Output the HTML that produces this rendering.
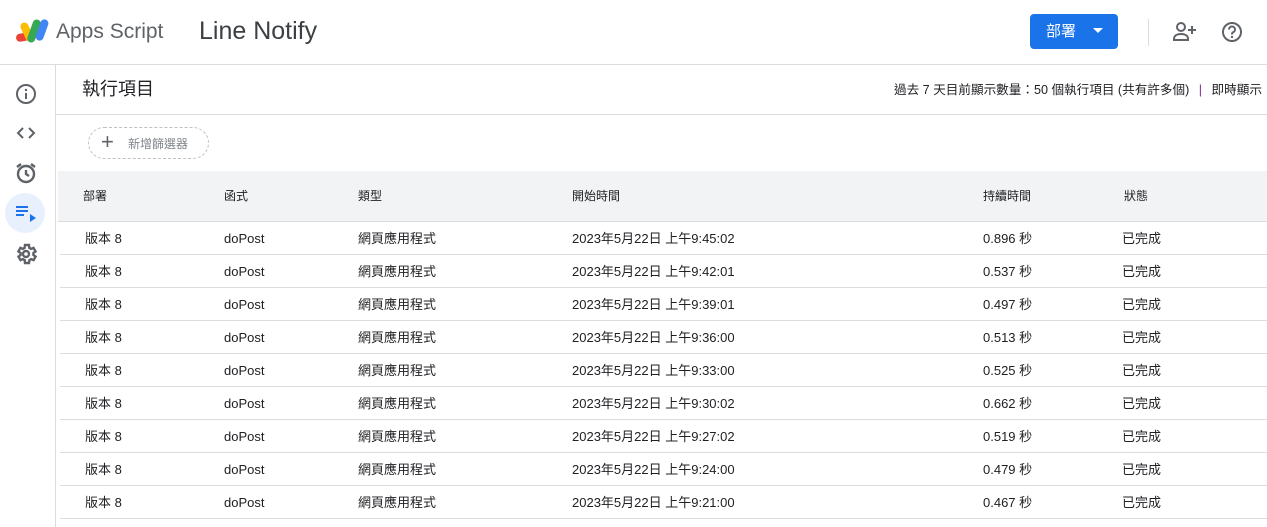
<!DOCTYPE html>
<html><head><meta charset="utf-8"><style>
body{margin:0;width:1267px;height:527px;overflow:hidden;background:#fff;font-family:"Liberation Sans","Noto Sans CJK TC",sans-serif;color:#3c4043;position:relative}
.abs{position:absolute}
.top{left:0;top:0;width:1267px;height:64px;border-bottom:1px solid #dadce0}
.side{left:0;top:65px;width:55px;height:462px;border-right:1px solid #dadce0}
.row{position:absolute;left:60px;width:1207px;height:32px;border-bottom:1px solid #dadce0;font-size:13px;color:#202124}
.row span,.hd span{position:absolute;top:9px;line-height:16px;white-space:nowrap}
.hd{position:absolute;left:58px;top:171px;width:1209px;height:50px;background:#f1f3f4;border-bottom:1px solid #dadce0;font-size:12px;color:#202124}
.hd span{top:17px}
</style></head><body>
<div class="abs top"></div>
<svg class="abs" style="left:15px;top:17px" width="34" height="30" viewBox="0 0 34 30">
<rect x="1" y="16" width="16" height="8" rx="4" fill="#ea4335" transform="rotate(-10 9 20)"/>
<rect x="8" y="5" width="8" height="20" rx="4" fill="#fbbc04" transform="rotate(-25 12 15)"/>
<rect x="15" y="2" width="8" height="24" rx="4" fill="#34a853" transform="rotate(20 19 14)"/>
<rect x="23" y="2" width="8" height="22" rx="4" fill="#4285f4" transform="rotate(20 27 13)"/>
</svg>
<div class="abs" style="left:56px;top:20px;font-size:21px;color:#5f6368">Apps Script</div>
<div class="abs" style="left:199px;top:17px;font-size:25px;color:#3c4043">Line Notify</div>
<div class="abs" style="left:1030px;top:14px;width:88px;height:35px;background:#1a73e8;border-radius:4px;color:#fff;font-size:15px"><span class="abs" style="left:16px;top:8px;line-height:20px">部署</span><span class="abs" style="left:63px;top:14px;border:5px solid transparent;border-top:5px solid #fff"></span></div>
<div class="abs" style="left:1148px;top:19px;width:1px;height:27px;background:#dadce0"></div>
<svg class="abs" style="left:1172px;top:20px" width="26" height="24" viewBox="0 0 26 24"><circle cx="9" cy="7" r="4" fill="none" stroke="#5f6368" stroke-width="2"/><path d="M2 19c0-4 4-5 7-5s7 1 7 5v1H2z" fill="none" stroke="#5f6368" stroke-width="2"/><path d="M20 6v8M16 10h8" stroke="#5f6368" stroke-width="2"/></svg>
<svg class="abs" style="left:1220px;top:20px" width="24" height="24" viewBox="0 0 24 24"><circle cx="12" cy="12" r="9" fill="none" stroke="#5f6368" stroke-width="2"/><path d="M9 9.5a3 3 0 1 1 4 2.8c-1 .4-1 1-1 2.2" fill="none" stroke="#5f6368" stroke-width="2"/><circle cx="12" cy="17" r="1.2" fill="#5f6368"/></svg>
<div class="abs side"></div>
<svg class="abs" style="left:14px;top:82px" width="24" height="24" viewBox="0 0 24 24"><circle cx="12" cy="12" r="9" fill="none" stroke="#5f6368" stroke-width="2"/><path d="M12 11v6" stroke="#5f6368" stroke-width="2"/><circle cx="12" cy="8" r="1.2" fill="#5f6368"/></svg>
<svg class="abs" style="left:14px;top:121px" width="24" height="24" viewBox="0 0 24 24"><path d="M9 7l-5 5 5 5M15 7l5 5-5 5" fill="none" stroke="#5f6368" stroke-width="2"/></svg>
<svg class="abs" style="left:14px;top:161px" width="24" height="24" viewBox="0 0 24 24"><circle cx="12" cy="13" r="8" fill="none" stroke="#5f6368" stroke-width="2.4"/><path d="M12 9v4l3 2M3 6l4-3M21 6l-4-3" fill="none" stroke="#5f6368" stroke-width="2.4"/></svg>
<div class="abs" style="left:5px;top:193px;width:40px;height:40px;border-radius:50%;background:#e8f0fe"></div>
<svg class="abs" style="left:14px;top:202px" width="24" height="24" viewBox="0 0 24 24"><path d="M2 5h12M2 9h12M2 13h8" stroke="#1a73e8" stroke-width="2"/><path d="M16 12l6 4-6 4z" fill="#1a73e8"/></svg>
<svg class="abs" style="left:14px;top:242px" width="24" height="24" viewBox="0 0 24 24"><path d="M19.4 13a7 7 0 0 0 0-2l2.1-1.6-2-3.5-2.5 1a7 7 0 0 0-1.7-1L15 3h-4l-.4 2.9a7 7 0 0 0-1.7 1l-2.5-1-2 3.5L6.6 11a7 7 0 0 0 0 2l-2.1 1.6 2 3.5 2.5-1a7 7 0 0 0 1.7 1L11 21h4l.4-2.9a7 7 0 0 0 1.7-1l2.5 1 2-3.5z" fill="none" stroke="#5f6368" stroke-width="2.4"/><circle cx="12" cy="12" r="3" fill="none" stroke="#5f6368" stroke-width="2.4"/></svg>
<div class="abs" style="left:82px;top:78px;font-size:18px;color:#202124;line-height:22px">執行項目</div>
<div class="abs" style="left:894px;top:82px;font-size:12.6px;line-height:16px;color:#202124;white-space:nowrap">過去 7 天目前顯示數量：50 個執行項目 (共有許多個) <span style="color:#8e24aa;margin:0 6px">|</span> 即時顯示</div>
<div class="abs" style="left:56px;top:114px;width:1211px;height:1px;background:#dadce0"></div>
<div class="abs" style="left:88px;top:127px;width:119px;height:30px;border:1px dashed #bdc1c6;border-radius:16px;font-size:12px;color:#80868b"><span class="abs" style="left:12px;top:2px;font-size:22px;line-height:24px;color:#5f6368;font-weight:300">+</span><span class="abs" style="left:39px;top:8px;line-height:16px">新增篩選器</span></div>
<div class="hd"><span style="left:25px">部署</span><span style="left:166px">函式</span><span style="left:300px">類型</span><span style="left:514px">開始時間</span><span style="left:925px">持續時間</span><span style="left:1066px">狀態</span></div>
<div id="rows"></div>
<script>
var t=["9:45:02","9:42:01","9:39:01","9:36:00","9:33:00","9:30:02","9:27:02","9:24:00","9:21:00"],d=["0.896","0.537","0.497","0.513","0.525","0.662","0.519","0.479","0.467"],h="";
for(var i=0;i<9;i++){h+='<div class="row" style="top:'+(222+i*33)+'px"><span style="left:25px">版本 8</span><span style="left:164px">doPost</span><span style="left:298px">網頁應用程式</span><span style="left:512px">2023年5月22日 上午'+t[i]+'</span><span style="left:923px">'+d[i]+' 秒</span><span style="left:1062px">已完成</span></div>';}
document.getElementById("rows").innerHTML=h;
</script>
</body></html>
